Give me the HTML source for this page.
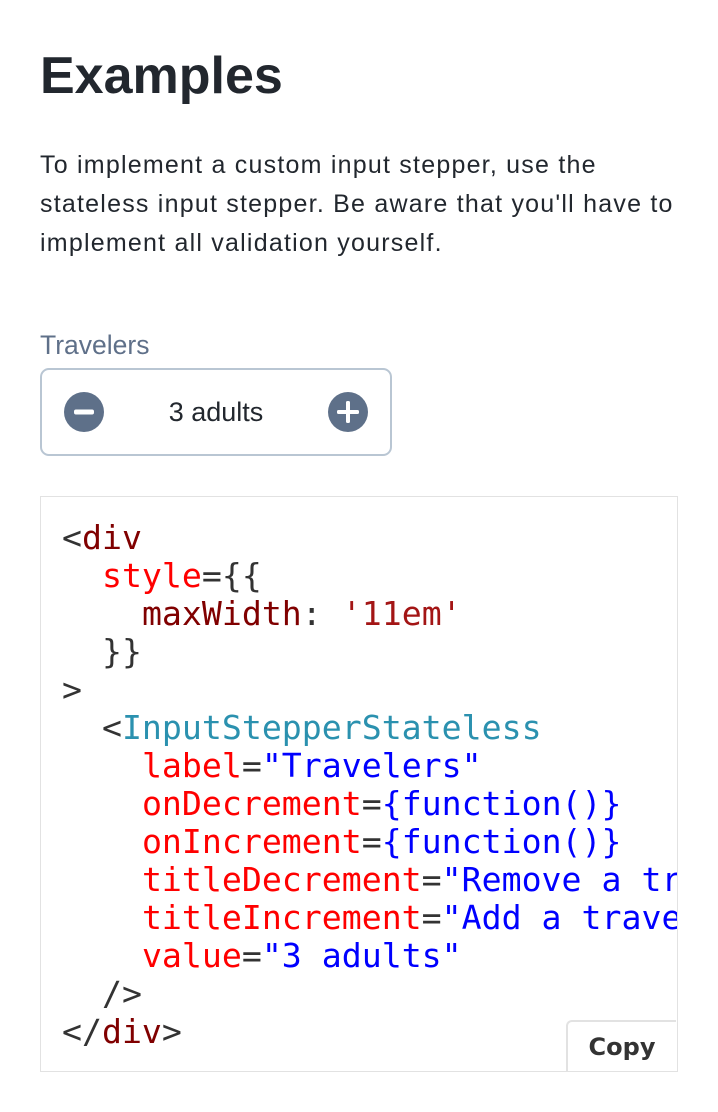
<!DOCTYPE html>
<html><head><style>
body{margin:0;background:#fff;width:718px;height:1112px;overflow:hidden;font-family:"Liberation Sans",sans-serif;}
h1{position:absolute;left:40px;top:41px;margin:0;font-size:52px;font-weight:bold;color:#22272e;line-height:70px;}
p{position:absolute;left:40px;top:146px;margin:0;width:680px;font-size:25px;letter-spacing:1.22px;line-height:39px;color:#22272e;white-space:nowrap;}
.lab{position:absolute;left:40px;top:330px;font-size:26.5px;color:#5f7089;}
.st{position:absolute;left:40px;top:368px;width:348px;height:84px;border:2px solid #b9c6d3;border-radius:9px;}
.st span{position:absolute;left:0;width:100%;top:27px;text-align:center;font-size:27px;color:#22272e;}
.st svg{position:absolute;top:22px}
.code{position:absolute;left:40px;top:496px;width:636px;height:574px;border:1px solid #e2e2e2;overflow:hidden;}
pre{margin:0;position:absolute;left:21px;top:22px;font-family:"DejaVu Sans Mono",monospace;font-size:33.2px;line-height:38px;color:#333;white-space:pre;}
.t{color:#800000}.a{color:#ff0000}.s{color:#0000ff}.c{color:#2b91af}.v{color:#a31515}
.copy{position:absolute;left:566px;top:1020px;width:110px;height:51px;border:2px solid #e2e2e2;border-bottom:none;border-right:none;border-radius:6px 0 0 0;background:#fff;font-family:"DejaVu Sans",sans-serif;font-weight:bold;font-size:24px;color:#333;text-align:center;line-height:50px;box-sizing:border-box;}
</style></head><body>
<h1>Examples</h1>
<p>To implement a custom input stepper, use the<br>stateless input stepper. Be aware that you'll have to<br>implement all validation yourself.</p>
<div class="lab">Travelers</div>
<div class="st">
<svg style="left:22px" width="40" height="40" viewBox="0 0 40 40"><circle cx="20" cy="20" r="20" fill="#5e7089"/><rect x="10" y="17.5" width="20" height="5" rx="2" fill="#fff"/></svg>
<span>3 adults</span>
<svg style="left:286px" width="40" height="40" viewBox="0 0 40 40"><circle cx="20" cy="20" r="20" fill="#5e7089"/><rect x="9" y="18" width="22" height="4" rx="1.5" fill="#fff"/><rect x="18" y="9" width="4" height="22" rx="1.5" fill="#fff"/></svg>
</div>
<div class="code"><pre>&lt;<span class="t">div</span>
  <span class="a">style</span>={{
    <span class="t">maxWidth</span>: <span class="v">'11em'</span>
  }}
&gt;
  &lt;<span class="c">InputStepperStateless</span>
    <span class="a">label</span>=<span class="s">"Travelers"</span>
    <span class="a">onDecrement</span>=<span class="s">{function()}</span>
    <span class="a">onIncrement</span>=<span class="s">{function()}</span>
    <span class="a">titleDecrement</span>=<span class="s">"Remove a traveler"</span>
    <span class="a">titleIncrement</span>=<span class="s">"Add a traveler"</span>
    <span class="a">value</span>=<span class="s">"3 adults"</span>
  /&gt;
&lt;/<span class="t">div</span>&gt;</pre></div>
<div class="copy">Copy</div>
</body></html>
